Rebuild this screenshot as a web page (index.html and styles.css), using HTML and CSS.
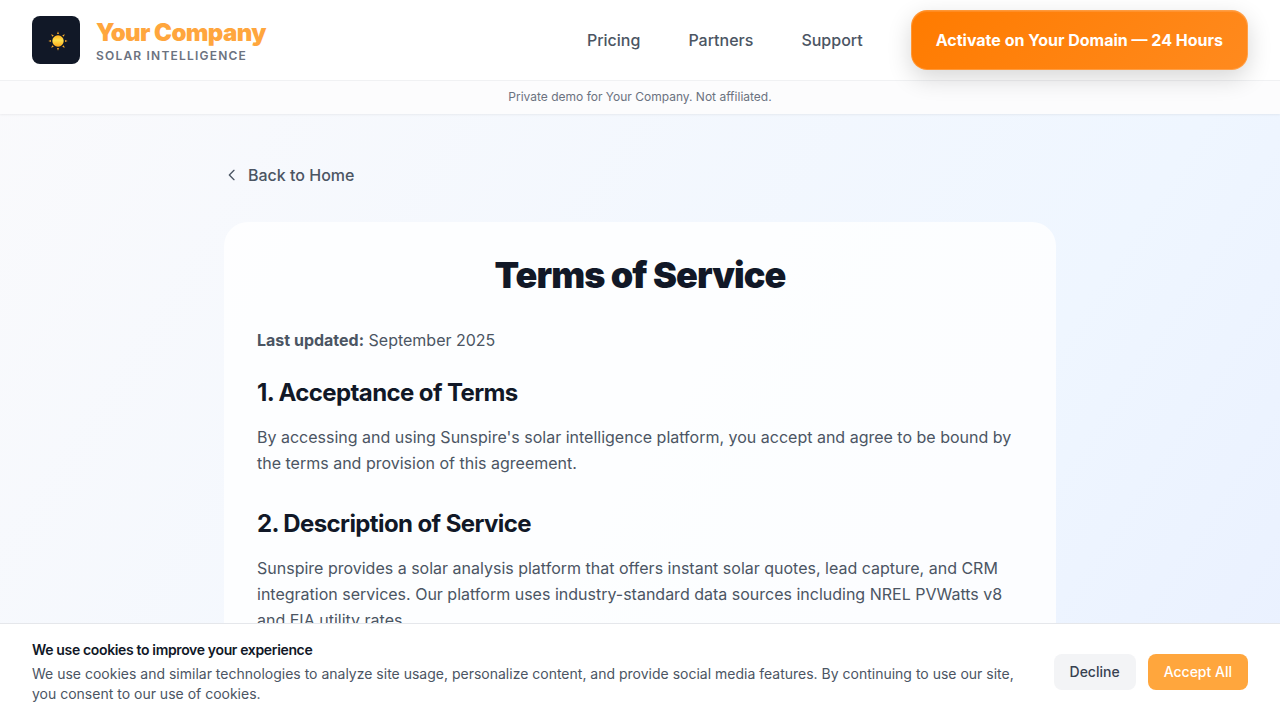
FILE: index.html
```html
<!DOCTYPE html>
<html lang="en">
<head>
<meta charset="utf-8">
<title>Terms of Service</title>
<link rel="stylesheet" href="styles.css">
</head>
<body>
<header class="header">
  <div class="nav">
    <a class="brand">
      <span class="logo">
        <svg class="sun" viewBox="0 0 20 20">
          <defs><linearGradient id="sun-fill" x1="0" y1="0" x2="0" y2="1"><stop offset="0" stop-color="#ffb01c"/><stop offset=".45" stop-color="#ffe14d"/><stop offset="1" stop-color="#ffa818"/></linearGradient></defs>
          <g fill="#f5a82a">
            <path id="ray" d="M9 3 10 .3l1 2.7z"/>
            <use href="#ray" transform="rotate(45 10 10)"/>
            <use href="#ray" transform="rotate(90 10 10)"/>
            <use href="#ray" transform="rotate(135 10 10)"/>
            <use href="#ray" transform="rotate(180 10 10)"/>
            <use href="#ray" transform="rotate(225 10 10)"/>
            <use href="#ray" transform="rotate(270 10 10)"/>
            <use href="#ray" transform="rotate(315 10 10)"/>
          </g>
          <circle cx="10" cy="10" r="5.7" fill="url(#sun-fill)"/>
        </svg>
      </span>
      <span class="brand-text">
        <span class="brand-name">Your Company</span>
        <span class="brand-tag">SOLAR INTELLIGENCE</span>
      </span>
    </a>
    <nav class="links">
      <a>Pricing</a>
      <a>Partners</a>
      <a>Support</a>
      <a class="cta">Activate on Your Domain — 24 Hours</a>
    </nav>
  </div>
  <div class="notice">Private demo for Your Company. Not affiliated.</div>
</header>
<main class="main">
  <a class="back">
    <svg class="chevron" viewBox="0 0 24 24" fill="none" stroke="currentColor" stroke-width="2" stroke-linecap="round" stroke-linejoin="round"><path d="M15 19l-7-7 7-7"/></svg>
    Back to Home
  </a>
  <article class="card">
    <h1 class="title">Terms of Service</h1>
    <p class="text updated"><strong>Last updated:</strong> September 2025</p>
    <h2 class="heading">1. Acceptance of Terms</h2>
    <p class="text">By accessing and using Sunspire's solar intelligence platform, you accept and agree to be bound by the terms and provision of this agreement.</p>
    <h2 class="heading">2. Description of Service</h2>
    <p class="text">Sunspire provides a solar analysis platform that offers instant solar quotes, lead capture, and CRM integration services. Our platform uses industry-standard data sources including NREL PVWatts v8 and EIA utility rates.</p>
  </article>
</main>
<aside class="cookies">
  <div class="cookie-copy">
    <h3 class="cookie-title">We use cookies to improve your experience</h3>
    <p class="cookie-text">We use cookies and similar technologies to analyze site usage, personalize content, and provide social media features. By continuing to use our site, you consent to our use of cookies.</p>
  </div>
  <div class="actions">
    <button class="btn decline">Decline</button>
    <button class="btn accept">Accept All</button>
  </div>
</aside>
</body>
</html>
```
FILE: styles.css
```css
* { box-sizing: border-box; margin: 0; }
body {
  height: 720px;
  display: flex;
  flex-direction: column;
  overflow: hidden;
  font-family: Inter, sans-serif;
  font-size: 16px;
  color: #111827;
  -webkit-font-smoothing: antialiased;
  background: linear-gradient(to bottom right, #fafafc, #eff6ff, #e0e7ff) 0 0 / 1280px 1950px no-repeat;
}
.header {
  position: relative;
  flex: none;
  height: 114px;
  background: rgba(255, 255, 255, .95);
  box-shadow: 0 1px 2px rgba(0, 0, 0, .06);
}
.nav {
  height: 80px;
  padding: 0 32px;
  display: flex;
  align-items: center;
  justify-content: space-between;
}
.brand { display: flex; align-items: center; gap: 16px; }
.logo {
  width: 48px;
  height: 48px;
  padding-left: 3px;
  padding-top: 2px;
  border-radius: 8px;
  background: #111827;
  display: flex;
  align-items: center;
  justify-content: center;
}
.sun { width: 20px; height: 20px; }
.brand-text { display: flex; flex-direction: column; }
.brand-name {
  font-size: 24px;
  line-height: 32px;
  font-weight: 900;
  letter-spacing: -.6px;
  color: #ffa63d;
}
.brand-tag {
  font-size: 12px;
  line-height: 14px;
  font-weight: 600;
  letter-spacing: 1.2px;
  color: #6b7280;
}
.links {
  display: flex;
  align-items: center;
  gap: 48px;
  font-weight: 500;
  color: #4b5563;
}
.cta {
  height: 60px;
  padding: 0 24px;
  display: flex;
  align-items: center;
  border: 1px solid rgba(255, 255, 255, .2);
  border-radius: 16px;
  color: #fff;
  font-weight: 700;
  background: linear-gradient(135deg, #ff7b00, #ff8a1e) border-box;
  box-shadow: 0 8px 24px rgba(0, 0, 0, .16), inset 0 1px 0 rgba(255, 255, 255, .12);
}
.notice {
  height: 34px;
  border-top: 1px solid #f0f1f3;
  background: rgba(249, 250, 251, .5);
  text-align: center;
  font-size: 12px;
  line-height: 32px;
  color: #6b7280;
}
.main {
  flex: 1;
  min-height: 0;
  width: 832px;
  margin: 0 auto;
  padding-top: 48px;
  display: flex;
  flex-direction: column;
}
.back {
  display: flex;
  align-items: center;
  gap: 8px;
  line-height: 26px;
  font-weight: 500;
  color: #4b5563;
}
.chevron { width: 16px; height: 16px; }
.card {
  flex: 1;
  min-height: 0;
  margin-top: 34px;
  padding: 33px 33px 0;
  border-radius: 24px 24px 0 0;
  background: rgba(255, 255, 255, .8);
}
.title {
  font-size: 36px;
  line-height: 40px;
  font-weight: 900;
  letter-spacing: -.9px;
  text-align: center;
}
.text { line-height: 26px; color: #4b5563; }
.updated { margin-top: 32px; }
.heading {
  margin-bottom: 15px;
  font-size: 24px;
  line-height: 32px;
  font-weight: 700;
  letter-spacing: -.6px;
}
.text + .heading { margin-top: 32px; }
.updated + .heading { margin-top: 24px; }
.cookies {
  position: fixed;
  left: 0;
  right: 0;
  bottom: 0;
  height: 97px;
  padding: 0 32px;
  display: flex;
  align-items: center;
  gap: 32px;
  background: #fff;
  border-top: 1px solid #e5e7eb;
}
.cookie-copy { flex: 1; }
.cookie-title {
  font-size: 14px;
  line-height: 20px;
  font-weight: 600;
  letter-spacing: -.35px;
  margin-bottom: 4px;
}
.cookie-text { font-size: 14px; line-height: 20px; color: #4b5563; }
.actions { display: flex; gap: 12px; }
.btn {
  height: 36px;
  padding: 0 16px;
  border: 0;
  border-radius: 8px;
  font: 500 14px/20px Inter, sans-serif;
}
.decline { color: #374151; background: #f3f4f6; }
.accept { color: #fff; background: #ffa63d; }
```
